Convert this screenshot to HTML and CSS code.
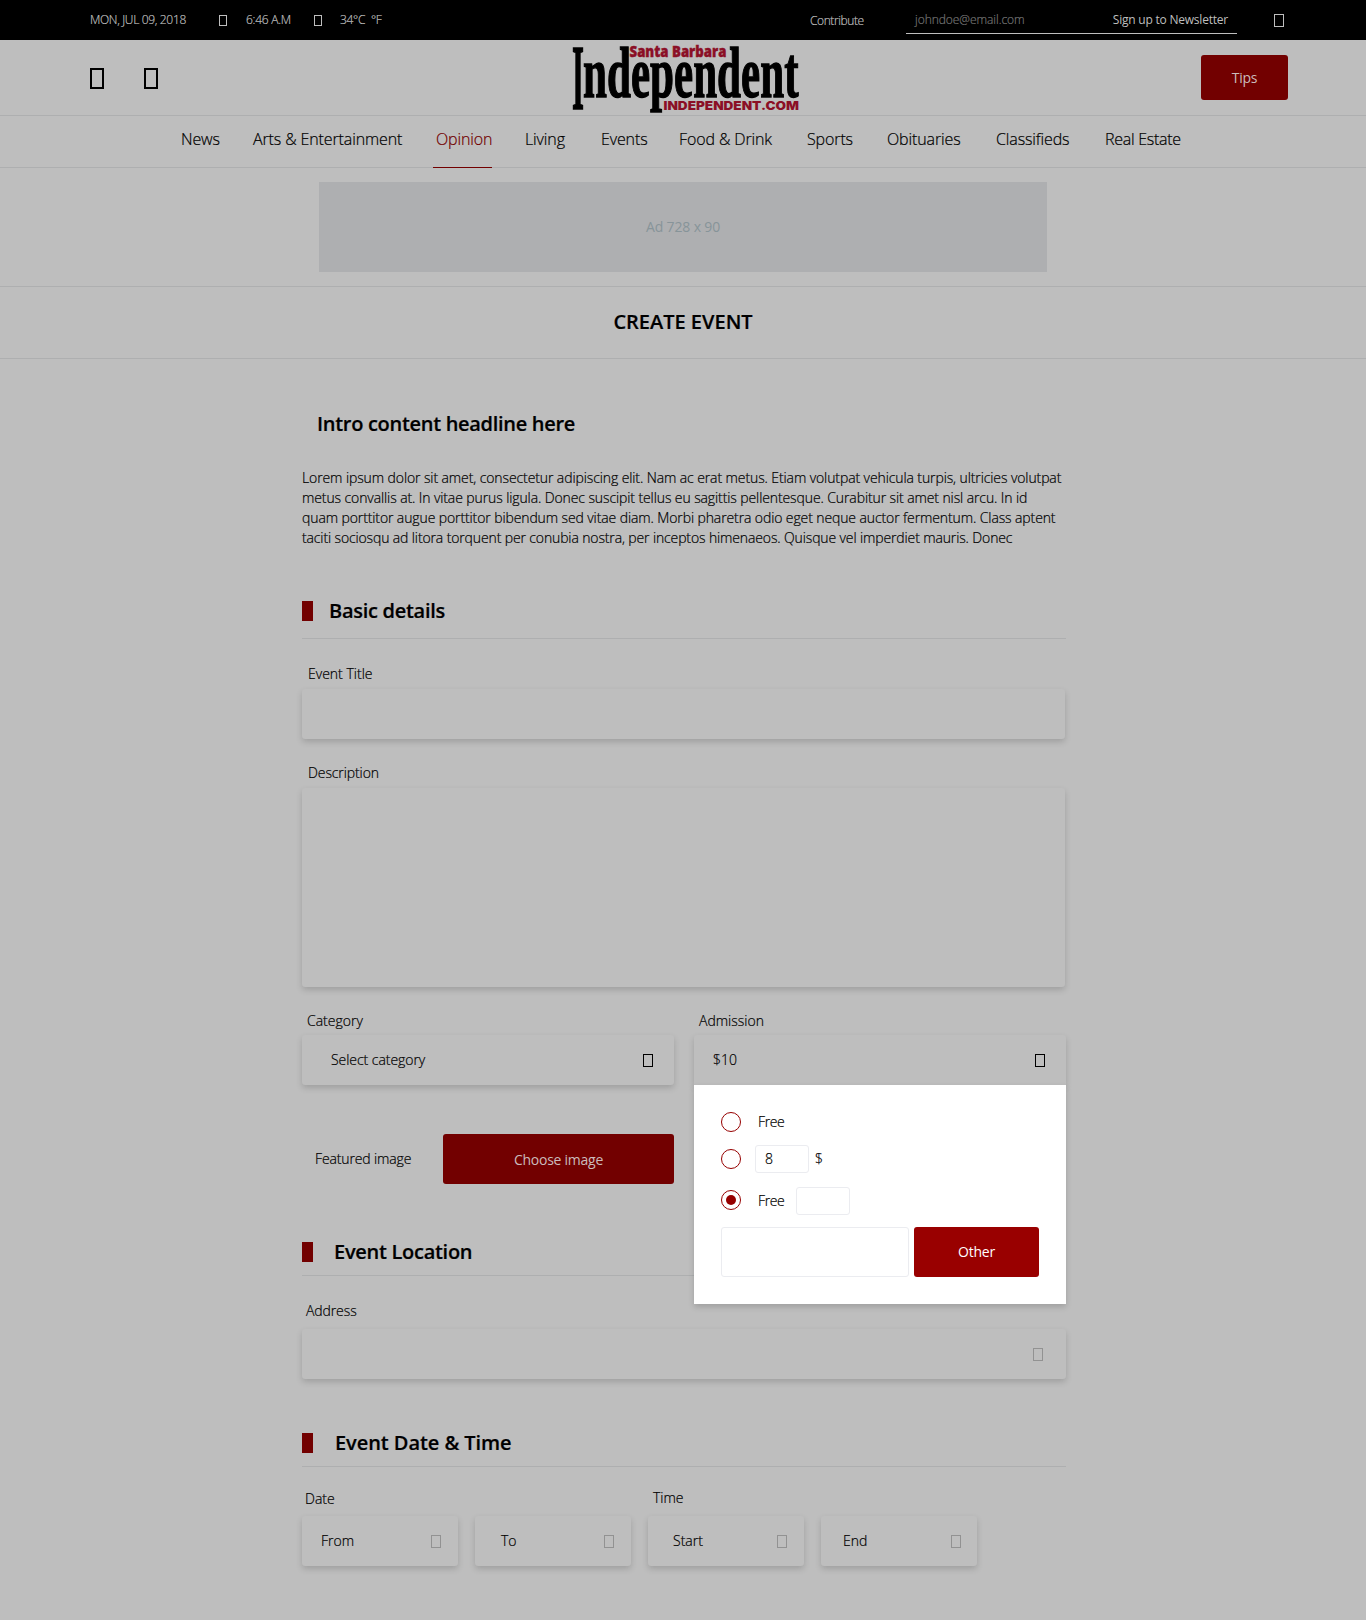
FILE: index.html
```html
<!DOCTYPE html>
<html lang="en">
<head>
<meta charset="utf-8">
<title>Create Event</title>
<link rel="stylesheet" href="styles.css">
</head>
<body>
<div class="topbar">
  <span class="date">MON, JUL 09, 2018</span>
  <i class="glyph glyph-sm"></i>
  <span class="clock">6:46 A.M</span>
  <i class="glyph glyph-sm"></i>
  <span class="celsius">34°C</span>
  <span class="fahrenheit">°F</span>
  <a class="contribute">Contribute</a>
  <div class="newsletter"><span class="email">johndoe@email.com</span><span class="signup">Sign up to Newsletter</span></div>
  <i class="glyph search"></i>
</div>
<header class="header">
  <div class="header-icons"><i class="glyph glyph-lg"></i><i class="glyph glyph-lg"></i></div>
  <svg class="logo" width="230" height="68" viewBox="571 44 230 68">
    <g class="logo-black">
      <text x="572" y="109.300" font-size="93" textLength="12" lengthAdjust="spacingAndGlyphs">I</text>
      <text x="583" y="96.500" font-size="71" textLength="215.500" lengthAdjust="spacingAndGlyphs">ndependent</text>
    </g>
    <g class="logo-red">
      <text x="629.500" y="56.500" font-size="15" textLength="97" lengthAdjust="spacingAndGlyphs">Santa Barbara</text>
      <text class="logo-domain" x="663.500" y="109.500" font-size="12" textLength="135.500" lengthAdjust="spacingAndGlyphs">INDEPENDENT.COM</text>
    </g>
  </svg>
  <a class="button tips">Tips</a>
</header>
<nav class="nav">
  <a>News</a><a>Arts &amp; Entertainment</a><a class="active">Opinion</a><a>Living</a><a>Events</a><a>Food &amp; Drink</a><a>Sports</a><a>Obituaries</a><a>Classifieds</a><a class="estate">Real Estate</a>
</nav>
<div class="ad-row"><div class="ad">Ad 728 x 90</div></div>
<h1 class="page-title">CREATE EVENT</h1>
<main class="form">
  <h2 class="intro-title">Intro content headline here</h2>
  <p class="intro">
    <span class="l1">Lorem ipsum dolor sit amet, consectetur adipiscing elit. Nam ac erat metus. Etiam volutpat vehicula turpis, ultricies volutpat</span>
    <span class="l2">metus convallis at. In vitae purus ligula. Donec suscipit tellus eu sagittis pellentesque. Curabitur sit amet nisl arcu. In id</span>
    <span class="l3">quam porttitor augue porttitor bibendum sed vitae diam. Morbi pharetra odio eget neque auctor fermentum. Class aptent</span>
    <span class="l4">taciti sociosqu ad litora torquent per conubia nostra, per inceptos himenaeos. Quisque vel imperdiet mauris. Donec</span>
  </p>
  <h3 class="section basic">Basic details</h3>
  <label class="label label-title">Event Title</label>
  <div class="field title-field"></div>
  <label class="label label-desc">Description</label>
  <div class="field desc-field"></div>
  <div class="columns">
    <div class="column">
      <label class="label label-category">Category</label>
      <div class="field select category"><span>Select category</span><i class="glyph"></i></div>
      <div class="image-row"><span class="label featured">Featured image</span><a class="button choose">Choose image</a></div>
    </div>
    <div class="column admission">
      <label class="label label-admission">Admission</label>
      <div class="field select price"><span>$10</span><i class="glyph"></i></div>
      <div class="dropdown">
        <div class="option"><i class="radio"></i><span class="free">Free</span></div>
        <div class="option option-price"><i class="radio"></i><span class="input small">8</span><span class="dollar">$</span></div>
        <div class="option option-free"><i class="radio checked"></i><span class="free">Free</span><span class="input small"></span></div>
        <div class="other-row"><span class="input wide"></span><a class="button other">Other</a></div>
      </div>
    </div>
  </div>
  <h3 class="section location">Event Location</h3>
  <label class="label label-address">Address</label>
  <div class="field select address"><i class="glyph muted"></i></div>
  <h3 class="section datetime">Event Date &amp; Time</h3>
  <div class="date-labels"><label class="label">Date</label><label class="label time-label">Time</label></div>
  <div class="date-row">
    <div class="field select from"><span>From</span><i class="glyph muted"></i></div>
    <div class="field select to"><span>To</span><i class="glyph muted"></i></div>
    <div class="field select start"><span>Start</span><i class="glyph muted"></i></div>
    <div class="field select end"><span>End</span><i class="glyph muted"></i></div>
  </div>
</main>
</body>
</html>
```
FILE: styles.css
```css
* { box-sizing: border-box; }
body {
  margin: 0;
  width: 1366px;
  height: 1620px;
  background: #bebebe;
  color: #000;
  font: 300 14px/20px "Open Sans", "Noto Sans", sans-serif;
  -webkit-text-stroke: .2px currentColor;
  white-space: nowrap;
  overflow: hidden;
}
h1, h2, h3, p { margin: 0; }
.glyph {
  display: block;
  flex: none;
  width: 10px;
  height: 13px;
  border: 1px solid currentColor;
}
.glyph-sm { width: 8px; height: 11px; }
.glyph-lg { width: 14px; height: 21px; border-width: 2px; }
.muted { color: #929292; }
.button {
  display: flex;
  align-items: center;
  justify-content: center;
  border-radius: 3px;
  background: #720000;
  color: #cbbcbc;
  font-weight: 400;
  letter-spacing: -0.25px;
  -webkit-text-stroke-width: 0;
}

.topbar {
  display: flex;
  align-items: center;
  height: 40px;
  padding-left: 90px;
  background: #000;
  color: #bebebe;
  font-size: 12px;
}
.date { width: 129px; letter-spacing: -0.33px; }
.clock { width: 68px; margin-left: 19px; letter-spacing: -0.25px; }
.celsius { width: 31px; margin-left: 18px; letter-spacing: -0.3px; }
.fahrenheit { width: 439px; letter-spacing: -0.3px; }
.contribute { width: 96px; padding-top: 1px; letter-spacing: -0.4px; }
.newsletter {
  display: flex;
  width: 331px;
  height: 28px;
  align-self: flex-end;
  margin-bottom: 6px;
  padding: 6px 9px 0;
  justify-content: space-between;
  line-height: 16px;
  border-bottom: 1px solid #bebebe;
}
.email { color: #747474; letter-spacing: -0.05px; }
.signup { font-weight: 400; letter-spacing: -0.22px; -webkit-text-stroke-width: 0; }
.search { margin-left: 37px; }

.header {
  display: flex;
  height: 76px;
  border-bottom: 1px solid #aeafb0;
}
.header-icons { display: flex; gap: 40px; width: 481px; padding-top: 28px; margin-left: 90px; }
.logo { margin-top: 4px; overflow: visible; }
.logo-black {
  font-family: "Liberation Serif", serif;
  font-weight: 700;
  fill: #000;
  stroke: #000;
  -webkit-text-stroke-width: 0;
  stroke-width: 1.4px;
}
.logo-red {
  font-family: "Open Sans", sans-serif;
  font-weight: 800;
  fill: #8b0f26;
  stroke: #8b0f26;
  -webkit-text-stroke-width: 0;
  stroke-width: .4px;
}
.logo-domain { font-family: Inter, sans-serif; font-weight: 900; stroke-width: 0; }
.tips { width: 87px; height: 45px; margin: 15px 0 0 400px; }

.nav {
  display: grid;
  grid-template-columns: 72px 183px 89px 76px 78px 128px 80px 109px 109px 80px;
  height: 52px;
  padding-left: 181px;
  border-bottom: 1px solid #aeafb0;
  font-size: 16px;
  line-height: 47px;
  letter-spacing: -0.12px;
}
.nav a { height: 52px; justify-self: start; }
.nav .active {
  width: 59px;
  margin-left: -3px;
  padding-left: 3px;
  color: #720000;
  border-bottom: 1px solid #720000;
}
.nav .estate { letter-spacing: -0.28px; }
.ad-row { height: 119px; padding: 14px 319px; border-bottom: 1px solid #aeafb0; }
.ad {
  height: 90px;
  background: #aeafb1;
  color: #879499;
  font-weight: 400;
  line-height: 90px;
  letter-spacing: -0.15px;
  text-align: center;
  -webkit-text-stroke-width: 0;
}
.page-title {
  height: 72px;
  border-bottom: 1px solid #aeafb0;
  font-size: 20px;
  font-weight: 600;
  line-height: 70px;
  text-align: center;
}

.form { width: 764px; margin-left: 302px; }
.intro-title {
  padding: 51px 0 0 15px;
  font-size: 20px;
  font-weight: 600;
  line-height: 28px;
  letter-spacing: -0.3px;
}
.intro { padding-top: 30px; }
.intro span { display: block; }
.l1, .l2 { letter-spacing: -0.104px; }
.l3 { letter-spacing: -0.11px; }
.l4 { letter-spacing: -0.13px; }
.section {
  display: flex;
  align-items: center;
  height: 37px;
  padding-bottom: 10px;
  border-bottom: 1px solid #aeafb0;
  font-size: 20px;
  font-weight: 600;
  letter-spacing: -0.28px;
}
.section::before {
  content: "";
  width: 11px;
  height: 20px;
  margin-right: 16px;
  background: #720000;
}
.basic { height: 38px; margin-top: 53px; padding-bottom: 17px; }
.label { display: block; }
.label-title { padding: 25px 0 0 6px; }
.field {
  border-radius: 3px;
  background: #bebebe;
  box-shadow: 0 3px 6px rgba(0, 0, 0, .16);
}
.title-field { width: 763px; height: 50px; margin-top: 5px; }
.label-desc { padding: 24px 0 0 6px; letter-spacing: -0.1px; }
.desc-field { width: 763px; height: 199px; margin-top: 5px; }
.columns { display: flex; gap: 20px; height: 247px; }
.column { width: 372px; padding-top: 24px; }
.label-category { padding-left: 5px; }
.label-admission { padding-left: 5px; }
.select {
  display: flex;
  align-items: center;
  justify-content: space-between;
  height: 50px;
  padding-right: 21px;
}
.column .select { margin-top: 4px; }
.category { padding-left: 29px; letter-spacing: -0.05px; }
.price { padding-left: 19px; }
.image-row {
  display: flex;
  align-items: center;
  justify-content: space-between;
  margin-top: 49px;
  padding-left: 13px;
}
.featured { letter-spacing: -0.13px; }
.choose { width: 231px; height: 50px; padding-top: 2px; }
.admission { position: relative; }
.price { border-radius: 3px 3px 0 0; }
.dropdown {
  position: absolute;
  left: 0;
  top: 98px;
  width: 372px;
  height: 219px;
  padding: 27px 27px 0;
  background: #fff;
  box-shadow: 0 3px 6px rgba(0, 0, 0, .16);
}
.option { display: flex; align-items: center; height: 20px; }
.option-price { height: 28px; margin-top: 13px; }
.option-free { height: 28px; margin-top: 14px; }
.radio {
  display: flex;
  width: 20px;
  height: 20px;
  border: 1px solid #960000;
  border-radius: 50%;
}
.option-free .radio { margin-top: -2px; }
.checked::after {
  content: "";
  width: 10px;
  height: 10px;
  margin: auto;
  border-radius: 50%;
  background: #960000;
}
.free { width: 38px; margin-left: 17px; letter-spacing: -0.4px; }
.input { border: 1px solid #ebecf0; border-radius: 3px; }
.small { width: 54px; height: 28px; padding-left: 9px; line-height: 26px; }
.option-price .small { margin-left: 14px; }
.dollar { margin-left: 6px; }
.other-row { display: flex; gap: 5px; margin-top: 12px; }
.wide { width: 188px; height: 50px; }
.other { width: 125px; height: 50px; background: #990000; color: #fff; }

.location { margin-top: 5px; }
.location::before { margin-right: 21px; }
.label-address { padding: 25px 0 0 4px; letter-spacing: -0.1px; }
.address { margin-top: 8px; padding-right: 23px; justify-content: flex-end; }
.datetime { margin-top: 51px; letter-spacing: -0.06px; }
.datetime::before { margin-right: 22px; }
.date-labels { display: flex; padding: 22px 0 0 3px; }
.date-labels .label { width: 348px; }
.date-labels .time-label { margin-top: -1px; }
.date-row { display: flex; gap: 17px; margin-top: 7px; }
.date-row .field { width: 156px; padding-right: 17px; }
.from { padding-left: 19px; }
.to { padding-left: 26px; }
.start { padding-left: 25px; }
.end { padding-left: 22px; }
.date-row .end { padding-right: 16px; }
```
